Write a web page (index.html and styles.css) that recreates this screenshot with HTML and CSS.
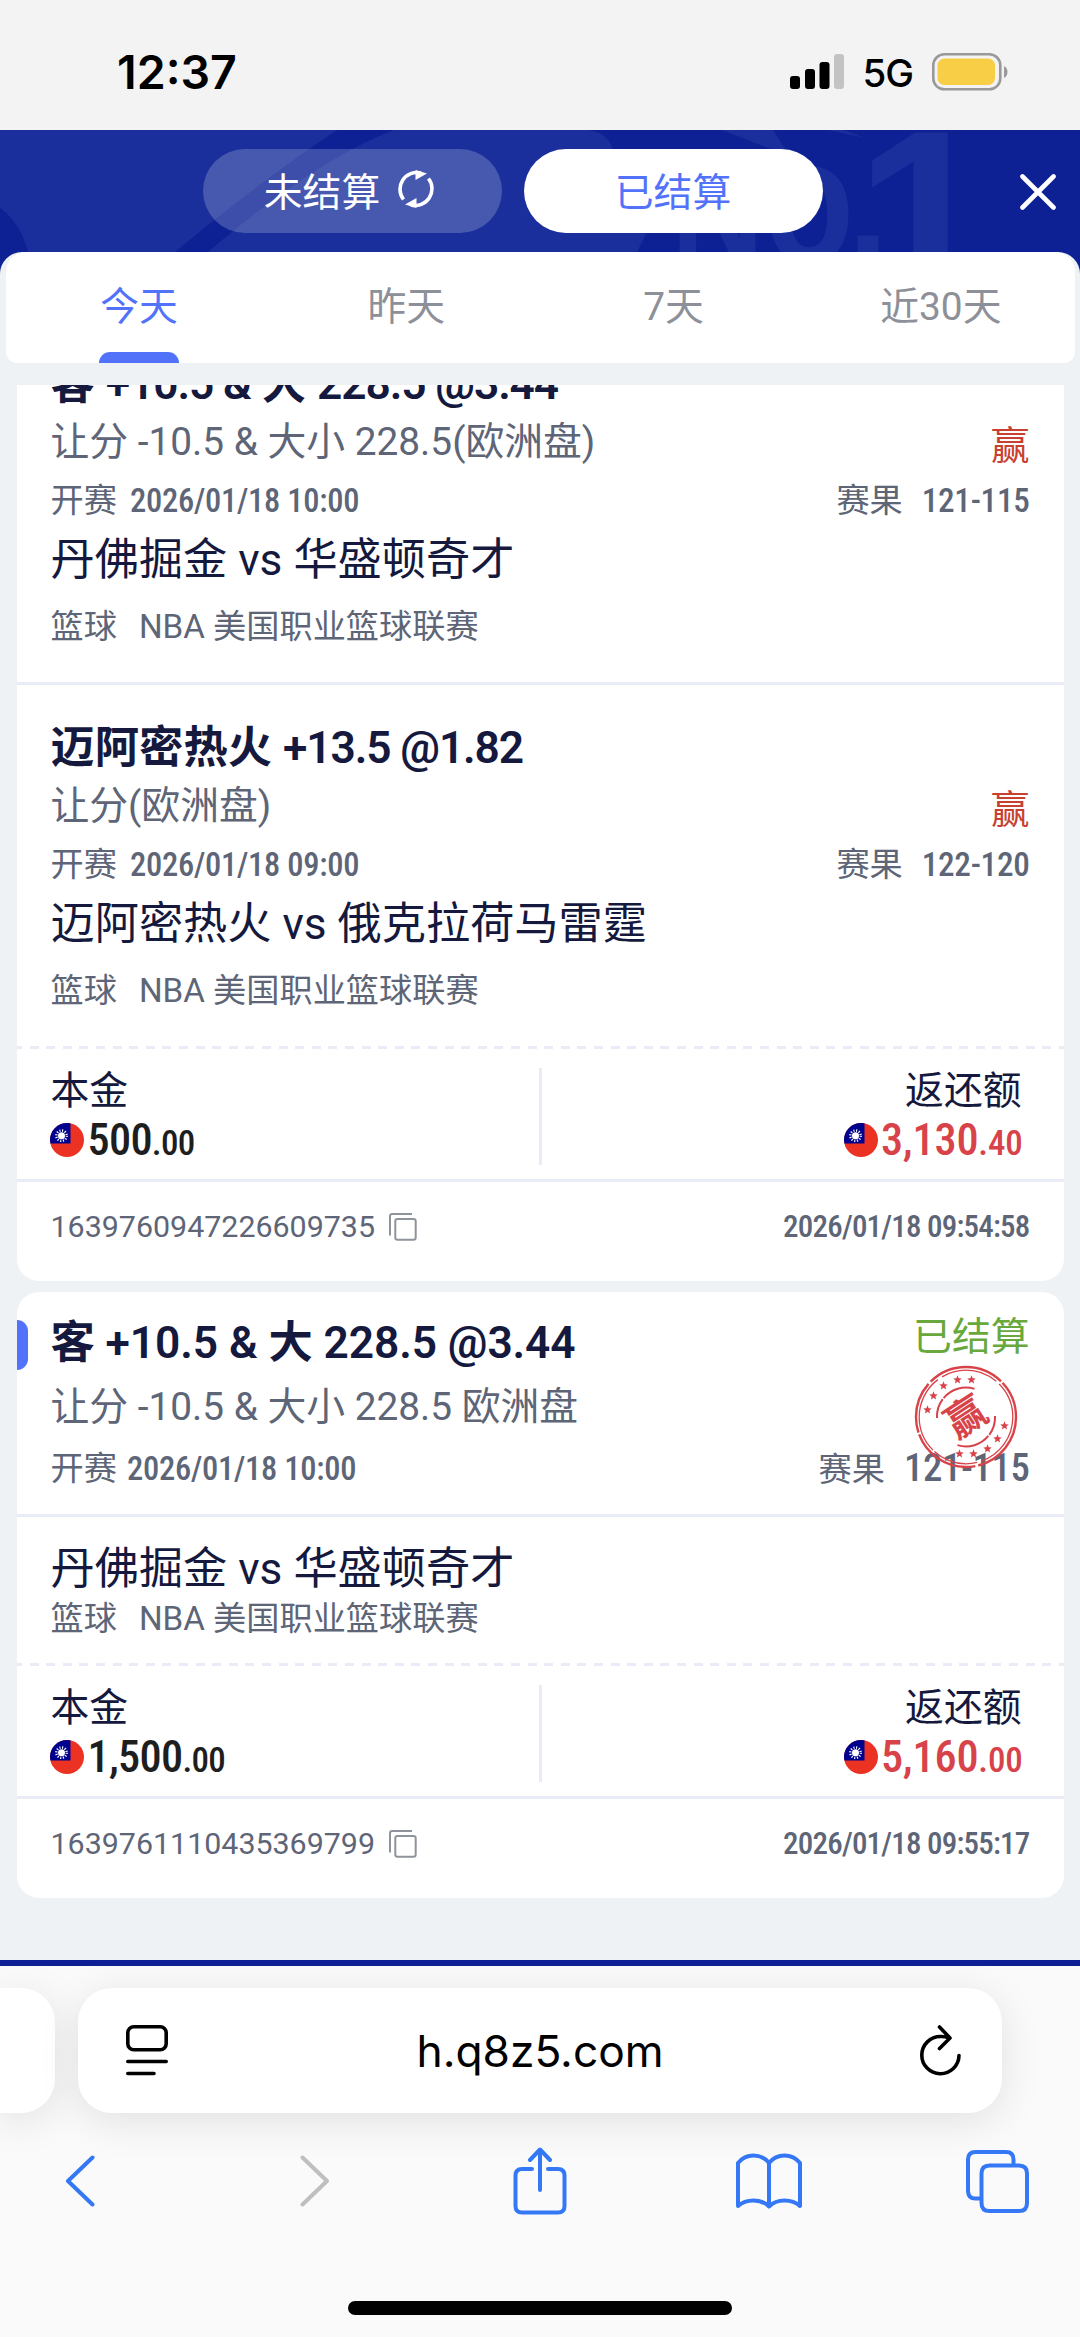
FILE: index.html
```html
<!DOCTYPE html>
<html lang="zh-CN">
<head>
    <meta charset="UTF-8">
    <meta name="viewport" content="width=device-width, initial-scale=1.0">
    <title>已结算</title>
    <link rel="stylesheet" href="styles.css">
</head>
<body>
    <!-- shared icons -->
    <svg class="defs" width="0" height="0">
        <symbol id="flag" viewBox="0 0 34 34">
            <clipPath id="round"><circle cx="17" cy="17" r="17"/></clipPath>
            <g clip-path="url(#round)">
                <rect width="34" height="34" fill="#ec3323"/>
                <rect width="20.5" height="20.5" fill="#00008f"/>
                <circle cx="11.5" cy="12.7" r="5.2" fill="none" stroke="#fff" stroke-width="2.4" stroke-dasharray="1.1 1.62"/>
                <circle cx="11.5" cy="12.7" r="3.5" fill="#fff"/>
            </g>
        </symbol>
        <symbol id="copy" viewBox="0 0 28 28">
            <path d="M1 22.5V3.2Q1 1 3.200 1H23M8.500 6H24.500Q26.700 6 26.700 8.200V24.500Q26.700 26.700 24.500 26.700H8.500Q6.300 26.700 6.300 24.500V8.200Q6.300 6 8.500 6Z" fill="none" stroke="#8f939c" stroke-width="2"/>
        </symbol>
        <symbol id="star" viewBox="0 0 10 10">
            <path d="M5 .4 6.300 3.500 9.700 3.800 7.100 6 7.900 9.400 5 7.600 2.100 9.400 2.900 6 .3 3.800 3.700 3.500Z"/>
        </symbol>
    </svg>

    <div class="status-bar">
        <span class="clock">12:37</span>
        <div class="status-icons">
            <svg width="54" height="36" viewBox="0 0 54 36">
                <rect x="0" y="22" width="10" height="13" rx="3"/>
                <rect x="15" y="15" width="10" height="20" rx="3"/>
                <rect x="29.500" y="8" width="10" height="27" rx="3"/>
                <rect x="44" y="0" width="10" height="35" rx="3" fill="#c3c3c3"/>
            </svg>
            <span class="network">5G</span>
            <svg width="76" height="38" viewBox="0 0 76 38">
                <rect x="1.300" y="1.300" width="67" height="35" rx="11" fill="none" stroke="#999" stroke-width="2.600"/>
                <rect x="5.500" y="5.500" width="57.500" height="26.500" rx="7" fill="#f8ce46"/>
                <path d="M72 13Q75.500 15 75.500 19T72 25Z" fill="#999"/>
            </svg>
        </div>
    </div>

    <div class="header">
        <svg class="header-bg" width="1080" height="122" viewBox="0 0 1080 122">
            <path d="M0 0H337Q262 50 175 122H28Q20 92 0 78Z"/>
            <path d="M208 122Q315 30 394 0H588Q610 3 613 22L646 104L637 122Z"/>
            <path d="M722 0H773L787 22L768 18ZM828 0H843L866 8Z"/>
            <text class="mark" transform="translate(671 132) scale(.86 1)" font-size="150">N</text>
            <text class="mark" transform="translate(764 132) scale(.83 1)" font-size="178" letter-spacing="-8">o.</text>
            <text class="mark" x="855" y="175" font-size="250">1</text>
        </svg>
        <div class="switch">
            <button class="pill pending">
                未结算
                <svg width="38" height="38" viewBox="0 0 38 38">
                    <path d="M6.500 29.500A16.800 16.800 0 0 1 24 3M31.500 8.500A16.800 16.800 0 0 1 14 35" fill="none" stroke="#fff" stroke-width="3.600"/>
                    <path d="M18.500 0 30 3.500 18.500 10ZM19.500 38 8 34.500 19.500 28Z" fill="#fff"/>
                </svg>
            </button>
            <button class="pill active">已结算</button>
        </div>
        <svg class="close" width="36" height="36" viewBox="0 0 36 36">
            <path d="M2.500 2.500 33.500 33.500M33.500 2.500 2.500 33.500" stroke="#fff" stroke-width="4.600" stroke-linecap="round"/>
        </svg>
    </div>

    <div class="panel">
        <div class="tabs">
            <div class="tab active">今天</div>
            <div class="tab">昨天</div>
            <div class="tab">7天</div>
            <div class="tab">近30天</div>
        </div>

        <div class="list">
            <div class="card first">
                <div class="leg">
                    <div class="title">客 <span>+10.5 &amp;</span> 大 <span>228.5 @3.44</span></div>
                    <div class="row play"><span>让分 -10.5 &amp; 大小 228.5(欧洲盘)</span><span class="win">赢</span></div>
                    <div class="row when"><span>开赛<b class="din">2026/01/18 10:00</b></span><span>赛果<b class="din score">121-115</b></span></div>
                    <div class="teams">丹佛掘金 vs 华盛顿奇才</div>
                    <div class="league"><span>篮球</span>NBA 美国职业篮球联赛</div>
                </div>
                <div class="line"></div>
                <div class="leg">
                    <div class="title">迈阿密热火 <span>+13.5 @1.82</span></div>
                    <div class="row play"><span>让分(欧洲盘)</span><span class="win">赢</span></div>
                    <div class="row when"><span>开赛<b class="din">2026/01/18 09:00</b></span><span>赛果<b class="din score">122-120</b></span></div>
                    <div class="teams">迈阿密热火 vs 俄克拉荷马雷霆</div>
                    <div class="league"><span>篮球</span>NBA 美国职业篮球联赛</div>
                </div>
                <div class="dashed"></div>
                <div class="money">
                    <div class="stake">
                        <div class="label">本金</div>
                        <div class="amount"><svg width="34" height="34"><use href="#flag"/></svg><span>500<small>.00</small></span></div>
                    </div>
                    <div class="stake back">
                        <div class="label">返还额</div>
                        <div class="amount"><svg width="34" height="34"><use href="#flag"/></svg><span>3,130<small>.40</small></span></div>
                    </div>
                </div>
                <div class="line"></div>
                <div class="order">
                    <span class="order-id">1639760947226609735 <svg width="28" height="28"><use href="#copy"/></svg></span>
                    <b class="din">2026/01/18 09:54:58</b>
                </div>
            </div>

            <div class="card">
                <div class="single">
                    <div class="row title"><div>客 +10.5 &amp; 大 228.5 @3.44</div><div class="settled">已结算</div></div>
                    <div class="row play">让分 -10.5 &amp; 大小 228.5 欧洲盘</div>
                    <div class="row when"><span>开赛<b class="din">2026/01/18 10:00</b></span><span>赛果<b class="din score">121-115</b></span></div>
                    <svg class="stamp" width="104" height="104" viewBox="-52 -52 104 104">
                        <circle r="50" stroke-width="2.400" stroke-dasharray="66 3 70 2 52 3 78 2"/>
                        <circle r="46.800" stroke-width="1.300" stroke-dasharray="58 4 46 2 80 5"/>
                        <path d="M-29 1A29 29 0 0 1 9-28M29-1A29 29 0 0 1-9 28" stroke-width="2" stroke-dasharray="20 1.500 34 2"/>
                        <g class="ink">
                            <use href="#star" x="-43" y="-12" width="9" height="9"/>
                            <use href="#star" x="-37" y="-26" width="9" height="9"/>
                            <use href="#star" x="-27" y="-36" width="9" height="9"/>
                            <use href="#star" x="-13" y="-42" width="9" height="9"/>
                            <use href="#star" x="1" y="-42" width="9" height="9"/>
                            <use href="#star" x="34" y="4" width="9" height="9"/>
                            <use href="#star" x="27" y="17" width="9" height="9"/>
                            <use href="#star" x="17" y="27" width="9" height="9"/>
                            <use href="#star" x="3" y="32" width="9" height="9"/>
                            <use href="#star" x="-11" y="32" width="9" height="9"/>
                            <text transform="rotate(-33)" y="14" text-anchor="middle">赢</text>
                        </g>
                    </svg>
                </div>
                <div class="line"></div>
                <div class="match">
                    <div class="teams">丹佛掘金 vs 华盛顿奇才</div>
                    <div class="league"><span>篮球</span>NBA 美国职业篮球联赛</div>
                </div>
                <div class="dashed"></div>
                <div class="money">
                    <div class="stake">
                        <div class="label">本金</div>
                        <div class="amount"><svg width="34" height="34"><use href="#flag"/></svg><span>1,500<small>.00</small></span></div>
                    </div>
                    <div class="stake back">
                        <div class="label">返还额</div>
                        <div class="amount"><svg width="34" height="34"><use href="#flag"/></svg><span>5,160<small>.00</small></span></div>
                    </div>
                </div>
                <div class="line"></div>
                <div class="order">
                    <span class="order-id">1639761110435369799 <svg width="28" height="28"><use href="#copy"/></svg></span>
                    <b class="din">2026/01/18 09:55:17</b>
                </div>
            </div>
        </div>
    </div>

    <div class="browser">
        <div class="address">
            <div class="prev-tab"></div>
            <div class="url">
                <svg width="42" height="51" viewBox="0 0 42 51" fill="none" stroke="#000" stroke-width="3.600" stroke-linecap="round">
                    <rect x="1.800" y="1.800" width="38.400" height="23" rx="6"/>
                    <path d="M1.800 36.500H40.200M1.800 48.500H28"/>
                </svg>
                <span>h.q8z5.com</span>
                <svg width="42" height="52" viewBox="0 0 42 52" fill="none" stroke="#000" stroke-width="3.600" stroke-linecap="round" stroke-linejoin="round">
                    <path d="M39 30.500A18.600 18.600 0 1 1 20.500 11.500Q25 11.300 29 13M19.500 2 30 13 19.500 23.500"/>
                </svg>
            </div>
        </div>
        <div class="toolbar">
            <svg class="prev" width="30" height="52" viewBox="0 0 30 52"><path d="M27.500 2.500 3 26 27.500 49.500"/></svg>
            <svg class="off" width="30" height="52" viewBox="0 0 30 52"><path d="M2.500 2.500 27 26 2.500 49.500"/></svg>
            <svg width="54" height="68" viewBox="0 0 54 68"><path d="M19 22H9Q2.500 22 2.500 28.500V59Q2.500 65.500 9 65.500H45Q51.500 65.500 51.500 59V28.500Q51.500 22 45 22H35M27 43V3M17 13 27 2.500 37 13"/></svg>
            <svg width="66" height="56" viewBox="0 0 66 56"><path d="M33 10Q27 2.500 17.500 2.500T2 10V53Q8 47.500 17.500 47.500T33 53.500Q39 47.500 48.500 47.500T64 53V10Q58 2.500 48.500 2.500T33 10V53"/></svg>
            <svg width="63" height="63" viewBox="0 0 63 63"><path d="M15 48.500H9.500Q2 48.500 2 41V9.500Q2 2 9.500 2H40Q47.500 2 47.500 9.500V15M23.500 15.500H53Q61 15.500 61 23.500V53Q61 61 53 61H23.500Q15.500 61 15.500 53V23.500Q15.500 15.500 23.500 15.500Z"/></svg>
        </div>
        <div class="home-bar"></div>
    </div>
</body>
</html>
```
FILE: styles.css
```css
* {
    box-sizing: border-box;
}
body {
    margin: 0;
    width: 1080px;
    height: 2337px;
    overflow: hidden;
    background: #0d2195;
    font-family: Roboto, "Noto Sans CJK SC", sans-serif;
    color: #14193d;
}
svg {
    display: block;
    flex: none;
}
.defs {
    position: absolute;
}

/* status bar */
.status-bar {
    height: 130px;
    padding: 14px 72px 0 117px;
    display: flex;
    justify-content: space-between;
    align-items: center;
    background: #f3f3f3;
    font-family: Inter, sans-serif;
    color: #000;
}
.clock {
    font-size: 46.5px;
    font-weight: 600;
}
.status-icons {
    display: flex;
    align-items: center;
}
.network {
    margin: 2px 19px 0 18px;
    font-size: 38.5px;
    font-weight: 500;
    letter-spacing: -1px;
}

/* header */
.header {
    position: relative;
    height: 122px;
    display: flex;
    align-items: center;
    justify-content: center;
}
.header-bg {
    position: absolute;
    left: 0;
    top: 0;
    fill: #1a2f9b;
}
.mark {
    font-family: "Liberation Sans", sans-serif;
    font-weight: 700;
}
.switch {
    position: relative;
    display: flex;
    gap: 22px;
    margin-right: 55px;
}
.pill {
    width: 299px;
    height: 84px;
    padding: 0 0 4px;
    display: flex;
    align-items: center;
    justify-content: center;
    gap: 17px;
    border: none;
    border-radius: 42px;
    background: rgba(255, 255, 255, 0.2);
    font-family: inherit;
    font-size: 38.8px;
    color: #fff;
}
.pill.pending {
    padding-right: 5px;
}
.pill.active {
    background: #fff;
    color: #5272fa;
}
.pill svg {
    margin-bottom: 1px;
}
.close {
    position: absolute;
    right: 24px;
    top: 44px;
}

/* day tabs */
.panel {
    height: 1708px;
    padding: 0 5.5px;
    background: #eef2f5;
    border-radius: 22px 22px 0 0;
}
.tabs {
    height: 111px;
    display: grid;
    grid-template-columns: repeat(4, 1fr);
    background: #fff;
    border-radius: 20px 20px 11px 11px;
}
.tab {
    display: flex;
    flex-direction: column;
    align-items: center;
    line-height: 110px;
    font-size: 38.8px;
    color: #8d9098;
}
.tab.active {
    color: #5272fa;
}
.tab.active::after {
    content: "";
    width: 80px;
    height: 11px;
    margin-top: -10px;
    border-radius: 11px 11px 0 0;
    background: #5272fa;
}

/* bet cards */
.list {
    height: 1575px;
    margin: 22px 11px 0;
    overflow: hidden;
}
.card {
    margin-bottom: 11px;
    background: #fff;
    border-radius: 22px;
}
.card.first {
    margin-top: -64px;
}
.leg {
    padding: 37px 34px 18px;
}
.row {
    display: flex;
    justify-content: space-between;
    align-items: center;
}
.title {
    height: 52px;
    line-height: 52px;
    font-size: 44.3px;
    font-weight: 600;
}
.title span {
    letter-spacing: -1.1px;
}
.play {
    height: 62px;
    padding-bottom: 6px;
    font-size: 38.8px;
    color: #5d6577;
}
.win {
    padding-top: 8px;
    color: #c8402f;
}
.when {
    height: 58px;
    font-size: 33.2px;
    line-height: 58px;
    color: #5d6577;
}
.din {
    font-family: "Roboto Condensed", Roboto, sans-serif;
    font-weight: 500;
    font-size: 32.5px;
    letter-spacing: -0.25px;
    margin-left: 13px;
}
.score {
    margin-left: 19px;
    font-size: 33.2px;
    letter-spacing: -0.3px;
}
.teams {
    height: 60px;
    line-height: 60px;
    font-size: 44.2px;
}
.league {
    height: 74px;
    line-height: 74px;
    font-size: 33.2px;
    color: #5d6577;
}
.league span {
    margin-right: 22px;
}
.line {
    height: 3px;
    background: #e9ecf6;
}
.dashed {
    height: 3px;
    background: repeating-linear-gradient(90deg, #e9ecf6 0 9px, #fff 9px 16.6px) -4px 0;
}
.money {
    height: 130px;
    display: flex;
    padding: 19px 41px 14px 34px;
}
.stake {
    width: 488px;
}
.stake.back {
    flex: 1;
    display: flex;
    flex-direction: column;
    align-items: flex-end;
    border-left: 3px solid #e9ecf6;
}
.label {
    height: 46px;
    line-height: 46px;
    font-size: 38.8px;
}
.back .label {
    margin-right: 1px;
}
.amount {
    height: 51px;
    margin-left: -1px;
    display: flex;
    align-items: center;
    gap: 4px;
    font-family: "Roboto Condensed", Roboto, sans-serif;
    font-size: 44.3px;
    font-weight: 500;
    letter-spacing: -0.7px;
    color: #1e1e1e;
}
.amount small {
    font-size: 35px;
}
.back .amount {
    gap: 3px;
    letter-spacing: -0.2px;
    color: #d8434a;
}
.order {
    height: 99px;
    padding: 0 34px 10px;
    display: flex;
    justify-content: space-between;
    align-items: center;
    color: #5d6577;
}
.order-id {
    display: flex;
    gap: 14px;
    align-items: center;
    font-size: 30.4px;
}
.order .din {
    font-size: 31px;
    letter-spacing: -0.8px;
}

/* single bet */
.single {
    position: relative;
    padding: 25px 34px 19px;
}
.single::before {
    content: "";
    position: absolute;
    left: 0;
    top: 28px;
    width: 11px;
    height: 50px;
    border-radius: 0 11px 11px 0;
    background: #5272fa;
}
.single .title {
    letter-spacing: -0.1px;
}
.settled {
    padding-bottom: 12px;
    font-size: 38.8px;
    font-weight: 400;
    letter-spacing: 0;
    color: #68a83c;
}
.single .play {
    height: 74px;
}
.single .when {
    height: 52px;
    line-height: 52px;
}
.single .din {
    margin-left: 10px;
}
.single .score {
    margin-left: 19px;
    font-size: 38.8px;
    letter-spacing: -0.4px;
}
.stamp {
    position: absolute;
    right: 46px;
    top: 73px;
    fill: none;
    stroke: #d8434a;
}
.ink {
    fill: #d8434a;
    stroke: none;
    font-size: 40px;
    font-weight: 700;
}
.match {
    padding: 26px 34px 20px;
}
.match .teams {
    height: 52px;
    line-height: 52px;
}
.match .league {
    height: 48px;
    line-height: 48px;
}

/* browser bar */
.browser {
    height: 371px;
    margin-top: 6px;
    padding-top: 22px;
    background: #fafafa;
    overflow: hidden;
}
.address {
    display: flex;
    gap: 23px;
}
.prev-tab,
.url {
    height: 125px;
    background: #fff;
    box-shadow: 0 8px 40px rgba(0, 0, 0, 0.1);
}
.prev-tab {
    width: 55px;
    border-radius: 0 34px 34px 0;
}
.url {
    width: 924px;
    padding: 0 40px 0 48px;
    display: flex;
    justify-content: space-between;
    align-items: center;
    border-radius: 34px;
    font-family: Inter, sans-serif;
    font-size: 44.3px;
    color: #000;
}
.url span {
    margin-right: 8px;
}
.toolbar {
    width: 1145px;
    height: 68px;
    margin: 34px 0 0 -33px;
    display: grid;
    grid-template-columns: repeat(5, 1fr);
    justify-items: center;
    align-items: center;
    fill: none;
    stroke: #3478f6;
    stroke-width: 4;
    stroke-linecap: round;
    stroke-linejoin: round;
}
.prev {
    margin-right: 4px;
}
.off {
    margin-left: 9px;
    stroke: #bfbfbf;
}
.home-bar {
    width: 384px;
    height: 14px;
    margin: 86px auto 0;
    border-radius: 7px;
    background: #000;
}
```
